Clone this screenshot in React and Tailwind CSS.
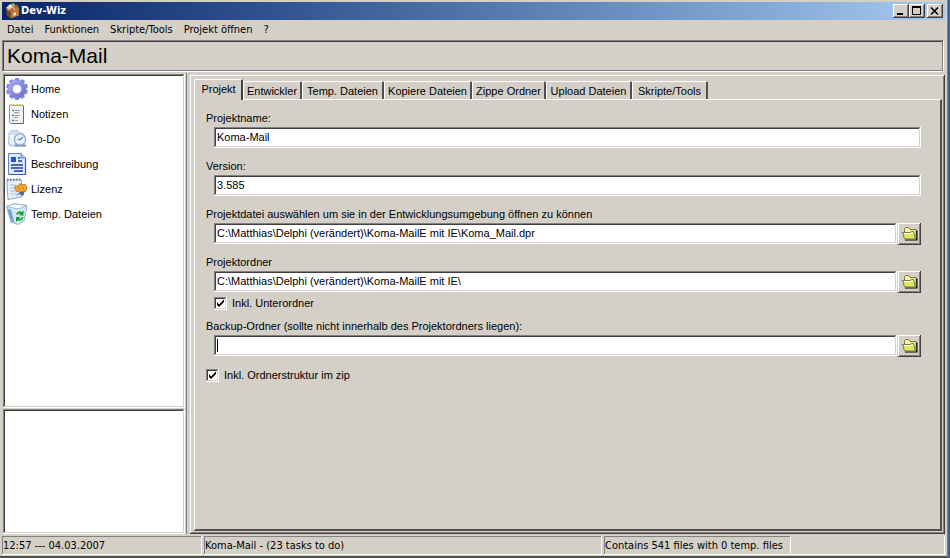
import React, { useState } from "react";

const RAISED =
  "bg-[#d4d0c8] shadow-[inset_-1px_-1px_0_#404040,inset_1px_1px_0_#ffffff,inset_-2px_-2px_0_#808080]";
const SUNKEN =
  "bg-white shadow-[inset_-1px_-1px_0_#ffffff,inset_1px_1px_0_#808080,inset_-2px_-2px_0_#d4d0c8,inset_2px_2px_0_#404040]";

function AppIcon() {
  return (
    <svg viewBox="0 0 16 16" className="h-4 w-4 shrink-0" aria-hidden="true">
      <path d="M1 6 6 9V15.500L2 13Z" fill="#7a4a24" />
      <path d="M6 9 14 5.500V12.500L6 15.500Z" fill="#b9783c" />
      <path d="M1 6 8 2.500 14 5.500 6 9Z" fill="#e3ae6d" />
      <path d="M1 5 5 1 8 2 6 6Z" fill="#e6ddc8" />
      <path d="M6 1 9 0 11 3 8 5Z" fill="#8fae6a" />
      <path d="M9 3 12 1.500 14 5 10 6.500Z" fill="#a9682f" />
      <path d="M4 7 7 5 9 7 6 9Z" fill="#c2553c" />
      <path d="M8.500 10 11 9V12L8.500 13Z" fill="#f7dfb0" />
    </svg>
  );
}

function GearIcon() {
  const teeth = [0, 36, 72, 108, 144, 180, 216, 252, 288, 324];
  return (
    <svg viewBox="0 0 22 22" className="h-[22px] w-[22px] shrink-0" aria-hidden="true">
      <defs>
        <linearGradient id="gear" x1="0" y1="0" x2="1" y2="1">
          <stop offset="0" stopColor="#a4a8f2" />
          <stop offset="1" stopColor="#6f72ca" />
        </linearGradient>
      </defs>
      {teeth.map((a) => (
        <rect key={a} x="8.700" y="0" width="4.600" height="6" rx="1.200" fill="#8588dc" transform={`rotate(${a} 11 11)`} />
      ))}
      <circle cx="11" cy="11" r="6.900" fill="none" stroke="url(#gear)" strokeWidth="4.600" />
      <circle cx="11" cy="11" r="4.600" fill="#fff" stroke="#7377c9" strokeWidth=".6" />
    </svg>
  );
}

function NotesIcon() {
  return (
    <svg viewBox="0 0 22 22" className="h-[22px] w-[22px] shrink-0" aria-hidden="true">
      <path d="M3.500 2.500H17.500V20.500H5L3.500 19Z" fill="#f1f3f4" stroke="#8292a2" />
      <path d="M17.500 3V20.500H5" fill="none" stroke="#5c6d7f" />
      <path d="M4 2H17" stroke="#d3bd62" strokeWidth="2" strokeDasharray="2 1" />
      <path d="M6 7.500H8M6 12.500H8M6 17.500H8" stroke="#6c7886" strokeWidth="1.500" />
      <path d="M9 7.500H14M8 9.500H13M9 12.500H14M8 14.500H12M9 17.500H12" stroke="#93a0ad" />
    </svg>
  );
}

function TodoIcon() {
  return (
    <svg viewBox="0 0 22 22" className="h-[22px] w-[22px] shrink-0" aria-hidden="true">
      <path d="M3 5 5 2.500H12L14 5H17V18H4L2.500 16Z" fill="#cfdff3" stroke="#b4c8e0" />
      <path d="M4 7H12V16H4Z" fill="#e9f1fb" />
      <path d="M9 17.500H20" stroke="#7d8fa8" strokeWidth="2" />
      <circle cx="14" cy="11.500" r="5.600" fill="#e8f3fd" stroke="#93abc8" strokeWidth="1.400" />
      <path d="M14 12 17 9M14 12 11.500 11" stroke="#6186ad" strokeWidth="1.200" fill="none" />
    </svg>
  );
}

function DescriptionIcon() {
  return (
    <svg viewBox="0 0 22 22" className="h-[22px] w-[22px] shrink-0" aria-hidden="true">
      <path d="M2.500 .5H15L19.500 5V21.500H2.500Z" fill="#dcebff" stroke="#5c82c8" />
      <path d="M15 .5V5H19.500" fill="#a9c8f3" stroke="#5c82c8" />
      <path d="M19.500 6V21.500H3" fill="none" stroke="#365ba7" strokeWidth="1.200" />
      <rect x="5" y="4" width="5" height="5" fill="#2353c0" />
      <path d="M12 5H14M12 8H16M5 12H17M5 15H17M8 18H17" stroke="#1e3d9c" strokeWidth="1.300" />
    </svg>
  );
}

function LicenseIcon() {
  return (
    <svg viewBox="0 0 22 22" className="h-[22px] w-[22px] shrink-0" aria-hidden="true">
      <path d="M.8 2H15.500V19L2 21.500Z" fill="#e6f0fa" stroke="#86a5c7" />
      <path d="M1 1.500H16" stroke="#75838f" strokeWidth="2" strokeDasharray="1.500 1.500" />
      <path d="M4 7H9M4 10H8M4 13H10M4 16H11" stroke="#a4bdd6" />
      <path d="M14 14 19 13 17 18 14 16 10 18Z" fill="#40649a" />
      <path d="M9 8 12 8 14 5.500 16 7 19 6 21 9.500 20 13 17 14 14.500 13 11 14 9 11Z" fill="#f0a62d" stroke="#bf6d18" strokeWidth=".8" />
      <path d="M12 9.500 14 11M16 9 18 11" stroke="#c07a20" strokeWidth="1" />
    </svg>
  );
}

function RecycleIcon() {
  return (
    <svg viewBox="0 0 22 22" className="h-[22px] w-[22px] shrink-0" aria-hidden="true">
      <path d="M.5 3.500 8 .8 21 2.500 18 18 12 21.500 5 19Z" fill="#d5e8f2" stroke="#8fb2c8" />
      <path d="M.5 3.500 12.500 6 21 2.500 8 .8Z" fill="#f2f8fc" stroke="#9db9cb" />
      <path d="M1.500 6 5 18.500 8.500 19.500 5 6.500Z" fill="#78a3d8" />
      <path d="M10 11Q12.500 7 16 9L17.500 7.500V12.500H13L14.500 10.800Q12.500 10 11.500 12Z" fill="#1b9a32" />
      <path d="M17.500 14Q16 19 11.500 17.500L10 19V14H14.500L13 15.800Q15 16.300 16 14Z" fill="#1b9a32" />
    </svg>
  );
}

function FolderIcon() {
  return (
    <svg viewBox="0 0 16 14" className="h-[14px] w-4" aria-hidden="true">
      <path d="M3 12.500H14V3.500H15.500V13.500H3Z" fill="#000" />
      <path d="M2.500 6V1.500L3.500 .5H6.500L8 2.500H14V12H3.500Z" fill="#f4f5a0" stroke="#77793a" />
      <path d="M.6 5.500H8L9.500 4.500H11.500L13.500 12H2.500Z" fill="#e2e86a" stroke="#77793a" />
      <path d="M2 6.500H8.500L10 5.500H11" stroke="#fffff0" fill="none" />
    </svg>
  );
}

const NAV = [
  ["Home", GearIcon],
  ["Notizen", NotesIcon],
  ["To-Do", TodoIcon],
  ["Beschreibung", DescriptionIcon],
  ["Lizenz", LicenseIcon],
  ["Temp. Dateien", RecycleIcon],
];

const TABS = [
  ["Entwickler", "w-[59px]"],
  ["Temp. Dateien", "w-[82px]"],
  ["Kopiere Dateien", "w-[88px]"],
  ["Zippe Ordner", "w-[74px]"],
  ["Upload Dateien", "w-[86px]"],
  ["Skripte/Tools", "w-[76px]"],
];

function Field({ id, label, value, browse, caret }) {
  const [text, setText] = useState(value);
  return (
    <div className="flex flex-col gap-px">
      <label htmlFor={id} className="h-4 leading-4">
        {label}
      </label>
      <div className="flex gap-px pl-2">
        <div className="relative flex min-w-0 flex-1">
          <input
            id={id}
            type="text"
            value={text}
            onChange={(e) => setText(e.target.value)}
            className={`h-[21px] w-full px-[3px] pb-px outline-none ${SUNKEN}`}
          />
          {caret && <span className="absolute top-1 left-[3px] h-[13px] w-px bg-black" />}
        </div>
        {browse && (
          <button type="button" aria-label="Ordner auswählen" className={`flex h-[22px] w-[23px] items-center justify-center ${RAISED}`}>
            <FolderIcon />
          </button>
        )}
      </div>
    </div>
  );
}

function Check({ label, className }) {
  return (
    <label className={`flex h-4 items-center gap-[5px] ${className}`}>
      <span className="relative flex">
        <input type="checkbox" defaultChecked className={`peer h-[13px] w-[13px] appearance-none ${SUNKEN}`} />
        <svg viewBox="0 0 13 13" className="pointer-events-none absolute top-0 left-0 hidden h-[13px] w-[13px] peer-checked:block" aria-hidden="true">
          <path d="M3 5V8L5 10 10 5V2.500L5 7.500Z" fill="#000" />
        </svg>
      </span>
      {label}
    </label>
  );
}

function CaptionButton({ label, children, className = "" }) {
  return (
    <button type="button" aria-label={label} className={`flex h-[14px] w-4 items-center justify-center ${RAISED} ${className}`}>
      <svg viewBox="0 0 12 10" className="h-[10px] w-3" aria-hidden="true" fill="none" stroke="#000">
        {children}
      </svg>
    </button>
  );
}

const TAHOMA = "font-['Tahoma','DejaVu_Sans_Condensed',sans-serif]";
const STATUS = "flex items-center pt-px pl-px shadow-[inset_-1px_-1px_0_#ffffff,inset_1px_1px_0_#808080]";

export default function App() {
  return (
    <div className="flex h-screen bg-[#3b6291] pr-[2px] font-['Liberation_Sans',Arial,sans-serif] text-[11px] text-black">
      <div className="flex min-w-0 flex-1 flex-col border-r border-b-2 border-r-[#808080] border-b-[#505050] bg-[#d4d0c8] pt-[2px] pr-[2px] pb-px pl-[2px]">
        <header className="flex h-[18px] shrink-0 items-center bg-linear-to-r from-[#0a246a] to-[#a6caf0] pr-[2px] pl-[3px]">
          <AppIcon />
          <span className={`flex-1 pt-px text-[11px] font-bold text-white ${TAHOMA}`}>Dev-Wiz</span>
          <CaptionButton label="Minimieren">
            <path d="M2 8H8" strokeWidth="2" />
          </CaptionButton>
          <CaptionButton label="Maximieren">
            <path d="M1.500 1V8.500H9.500V1M1 1H10" />
            <path d="M1 1H10" strokeWidth="2" />
          </CaptionButton>
          <CaptionButton label="Schließen" className="ml-[2px]">
            <path d="M2 1.500 9 8.500M9 1.500 2 8.500" strokeWidth="1.600" />
          </CaptionButton>
        </header>

        <nav className={`flex h-5 shrink-0 items-center gap-[11px] pt-px pl-[5px] ${TAHOMA}`}>
          {["Datei", "Funktionen", "Skripte/Tools", "Projekt öffnen", "?"].map((m) => (
            <button key={m} type="button">
              {m}
            </button>
          ))}
        </nav>

        <div className="mr-px flex h-8 shrink-0 items-center border border-[#808080] border-r-white border-b-white">
          <h1 className="flex h-full flex-1 items-center border border-[#404040] border-r-[#808080] border-b-[#808080] pl-[3px] text-[21px]">
            Koma-Mail
          </h1>
        </div>

        <main className="mt-px flex min-h-0 flex-1">
          <aside className="flex w-[185px] shrink-0 flex-col gap-px border-r border-[#808080] pt-px pr-px pl-px">
            <ul className={`flex-1 px-[3px] pt-[2px] ${SUNKEN}`}>
              {NAV.map(([name, Icon]) => (
                <li key={name}>
                  <a href="#" className="flex h-[25px] items-center gap-[3px]">
                    <Icon />
                    <span className="pt-px">{name}</span>
                  </a>
                </li>
              ))}
            </ul>
            <div className={`h-[125px] shrink-0 ${SUNKEN}`} />
          </aside>

          <section className={`mt-[2px] ml-[3px] flex min-w-0 flex-1 flex-col pt-1 pr-[3px] pb-[3px] pl-1 ${RAISED}`}>
            <div role="tablist" className="flex h-5 shrink-0 items-end">
              <button
                type="button"
                role="tab"
                aria-selected="true"
                className="z-10 -mb-px h-[21px] w-[49px] rounded-t-[2px] border-t border-r-2 border-l border-t-white border-r-[#404040] border-l-white bg-[#d4d0c8] pb-[2px] pl-px"
              >
                Projekt
              </button>
              {TABS.map(([name, width]) => (
                <button
                  key={name}
                  type="button"
                  role="tab"
                  aria-selected="false"
                  className={`h-[18px] shrink-0 rounded-t-[2px] border-t border-r-2 border-l border-t-white border-r-[#505050] border-l-white pt-px whitespace-nowrap ${width}`}
                >
                  {name}
                </button>
              ))}
            </div>
            <form className="flex flex-1 flex-col border-t border-r-2 border-b-2 border-l border-t-white border-r-[#505050] border-b-[#505050] border-l-white pt-[10px] pr-[19px] pl-[11px]">
              <div className="flex flex-col gap-[10px]">
                <Field id="name" label="Projektname:" value="Koma-Mail" />
                <Field id="version" label="Version:" value="3.585" />
                <Field id="file" label="Projektdatei auswählen um sie in der Entwicklungsumgebung öffnen zu können" value="C:\Matthias\Delphi (verändert)\Koma-MailE mit IE\Koma_Mail.dpr" browse />
              </div>
              <div className="mt-[9px]">
                <Field id="folder" label="Projektordner" value="C:\Matthias\Delphi (verändert)\Koma-MailE mit IE\" browse />
              </div>
              <Check label="Inkl. Unterordner" className="mt-[2px] mb-[7px] ml-2" />
              <Field id="backup" label="Backup-Ordner (sollte nicht innerhalb des Projektordners liegen):" value="" browse caret />
              <Check label="Inkl. Ordnerstruktur im zip" className="mt-[10px]" />
            </form>
          </section>
        </main>

        <footer className={`mt-[2px] flex h-[19px] shrink-0 gap-[2px] ${TAHOMA}`}>
          <div className={`w-[200px] ${STATUS}`}>12:57 --- 04.03.2007</div>
          <div className={`w-[398px] ${STATUS}`}>Koma-Mail - (23 tasks to do)</div>
          <div className={`w-[187px] ${STATUS}`}>Contains 541 files with 0 temp. files</div>
          <div className="-ml-[2px] flex-1 border-r border-b border-white" />
        </footer>
      </div>
    </div>
  );
}
